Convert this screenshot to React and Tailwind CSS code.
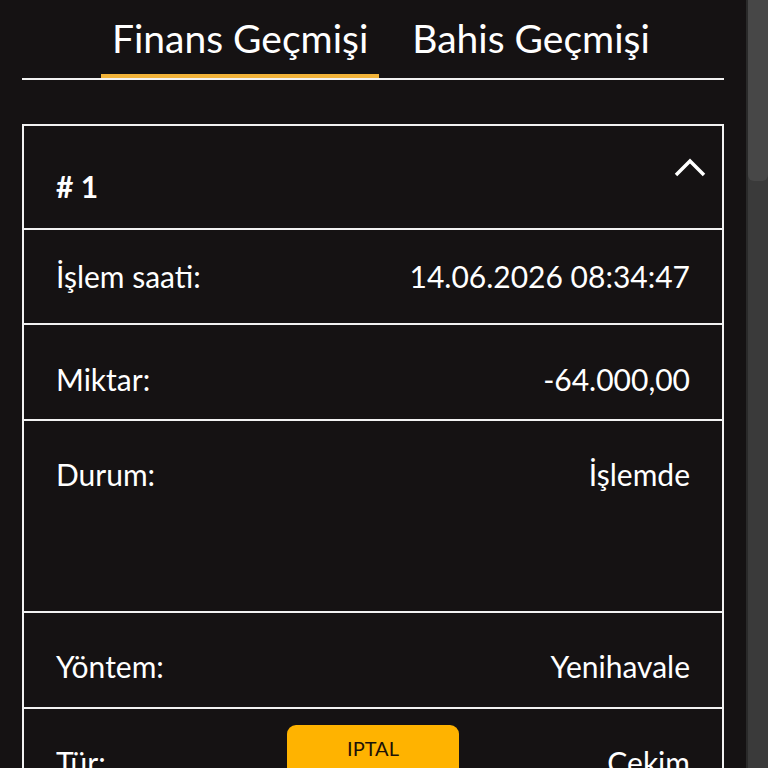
const rows = [
  { label: "İşlem saati:", value: "14.06.2026 08:34:47", h: "h-[95px]", pt: "pt-[28px]" },
  { label: "Miktar:", value: "-64.000,00", h: "h-[96px]", pt: "pt-[36px]" },
  { label: "Durum:", value: "İşlemde", h: "h-[192px]", pt: "pt-[35px]" },
  { label: "Yöntem:", value: "Yenihavale", h: "h-[96px]", pt: "pt-[35px]" },
];

export default function App() {
  return (
    <div
      className="flex h-[768px] overflow-hidden bg-[#151213] text-white"
      style={{ fontFamily: "Lato, 'Noto Sans', sans-serif" }}
    >
      <main className="flex-1 px-[22px] pt-[12px]">
        <nav className="flex border-b-2 border-[#f2f2f2] pl-[79px]">
          <div className="h-[66px] cursor-pointer border-b-[4px] border-[#f3b43a] px-[11px] pt-[2px] text-[39px] leading-[48px]">
            Finans Geçmişi
          </div>
          <div className="h-[66px] cursor-pointer pl-[33px] pt-[2px] text-[39px] leading-[48px]">
            Bahis Geçmişi
          </div>
        </nav>

        <section className="mt-[44px] border-2 border-[#f2f2f2]">
          <div className="flex h-[104px] items-start justify-between border-b-2 border-[#f2f2f2] pl-8 pr-[16px] pt-[42px]">
            <span className="text-[30px] font-bold leading-[36px]"># 1</span>
            <svg className="-mt-[10px]" width="32" height="19" viewBox="0 0 32 19" fill="none">
              <polyline points="2,17 16,3 30,17" stroke="white" strokeWidth="3.5" />
            </svg>
          </div>

          {rows.map((r) => (
            <div
              key={r.label}
              className={`flex items-start justify-between border-b-2 border-[#f2f2f2] px-8 text-[30px] leading-[36px] ${r.h} ${r.pt}`}
            >
              <span>{r.label}</span>
              <span>{r.value}</span>
            </div>
          ))}

          <div className="grid h-[110px] grid-cols-[1fr_auto_1fr] items-start px-8 pt-[16px] text-[30px] leading-[36px]">
            <span className="pt-[19px]">Tür:</span>
            <button className="flex h-[60px] w-[172px] items-start justify-center rounded-[9px] bg-[#ffb300] pt-[11px] text-[20px] leading-[24px] text-[#1c1208]">
              IPTAL
            </button>
            <span className="pt-[19px] text-right">Cekim</span>
          </div>
        </section>
      </main>

      <aside className="w-[22px] border-l-2 border-[#2a2a2a] bg-[#3a3a3a]">
        <div className="h-[181px] rounded-b-[6px] bg-[#474747]" />
      </aside>
    </div>
  );
}
